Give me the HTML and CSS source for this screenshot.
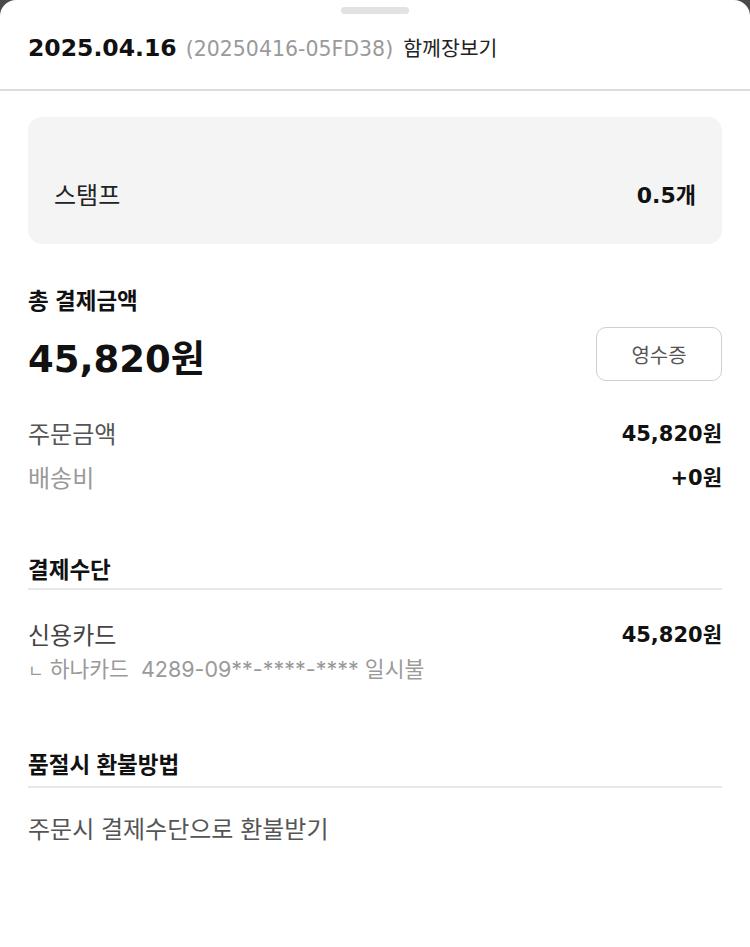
FILE: index.html
```html
<!DOCTYPE html>
<html lang="ko">
<head>
<meta charset="utf-8">
<link rel="stylesheet" href="styles.css">
</head>
<body>
<div class="sheet">
  <div class="handle"></div>
  <header class="head">
    <span class="date">2025.04.16</span>
    <span class="order-no">(20250416-05FD38)</span>
    <span class="kind">함께장보기</span>
  </header>
  <main class="content">
    <div class="stamp-box">
      <div class="row">
        <span class="stamp-label">스탬프</span>
        <span class="stamp-value">0.5개</span>
      </div>
    </div>

    <h2 class="title total-title">총 결제금액</h2>
    <div class="total-row">
      <span class="total-amount">45,820원</span>
      <button class="receipt">영수증</button>
    </div>

    <div class="lines">
      <div class="row">
        <span class="label">주문금액</span>
        <span class="value">45,820원</span>
      </div>
      <div class="row">
        <span class="label light">배송비</span>
        <span class="value">+0원</span>
      </div>
    </div>

    <h2 class="title section-title">결제수단</h2>
    <div class="row pay-row">
      <span class="label">신용카드</span>
      <span class="value">45,820원</span>
    </div>
    <div class="card-detail"><span class="mark">ㄴ</span> 하나카드&nbsp;&nbsp;4289-09**-****-**** 일시불</div>

    <h2 class="title section-title refund-title">품절시 환불방법</h2>
    <div class="refund">주문시 결제수단으로 환불받기</div>
  </main>
</div>
</body>
</html>
```

FILE: styles.css
```css
* { box-sizing: border-box; }
html, body { margin: 0; padding: 0; height: 100%; }
body {
  background: #4a4a4a;
  font-family: "Noto Sans CJK KR", sans-serif;
  color: #111;
}
.sheet {
  background: #fff;
  min-height: 100%;
  border-radius: 16px 16px 0 0;
  padding-top: 7px;
}
.handle {
  width: 68px;
  height: 7px;
  border-radius: 4px;
  background: #e2e2e2;
  margin: 0 auto;
}
.head {
  display: flex;
  align-items: baseline;
  height: 77px;
  padding: 18px 28px 0;
  border-bottom: 2px solid #dcdcdc;
}
.date {
  font-family: "DejaVu Sans", "Noto Sans CJK KR", sans-serif;
  font-size: 23.5px;
  font-weight: 700;
  color: #111;
}
.order-no {
  font-family: "DejaVu Sans", "Noto Sans CJK KR", sans-serif;
  font-size: 20.5px;
  color: #9a9a9a;
  margin-left: 9px;
}
.kind {
  font-size: 20.5px;
  color: #222;
  margin-left: 10px;
}
.content {
  padding: 26px 28px 40px;
}
.stamp-box {
  background: #f4f4f4;
  border-radius: 14px;
  padding: 62px 26px 37px;
}
.row {
  display: flex;
  justify-content: space-between;
  align-items: center;
  height: 32px;
}
.stamp-box .row { height: 28px; }
.stamp-label { font-size: 24px; color: #222; }
.stamp-value {
  font-family: "DejaVu Sans", "Noto Sans CJK KR", sans-serif;
  font-size: 22px;
  font-weight: 700;
  color: #111;
}
.title {
  margin: 0;
  font-size: 22.5px;
  font-weight: 700;
  line-height: 28px;
  color: #111;
}
.total-title { margin-top: 41px; }
.total-row {
  display: flex;
  justify-content: space-between;
  align-items: center;
  height: 54px;
  margin-top: 14px;
}
.total-amount {
  font-family: "DejaVu Sans", "Noto Sans CJK KR", sans-serif;
  font-size: 37px;
  font-weight: 700;
  padding-top: 3px;
}
.receipt {
  width: 126px;
  height: 54px;
  border: 1px solid #cfcfcf;
  border-radius: 10px;
  background: #fff;
  font-family: "Noto Sans CJK KR", sans-serif;
  font-size: 20px;
  color: #555;
}
.lines {
  margin-top: 35px;
  display: flex;
  flex-direction: column;
  gap: 12px;
}
.label { font-size: 24px; color: #555; }
.label.light { color: #9a9a9a; }
.value {
  font-family: "DejaVu Sans", "Noto Sans CJK KR", sans-serif;
  font-size: 21px;
  font-weight: 700;
  color: #111;
}
.section-title {
  margin-top: 62px;
  padding-bottom: 6px;
  border-bottom: 2px solid #e8e8e8;
}
.refund-title {
  margin-top: 64px;
  padding-bottom: 9px;
}
.pay-row { margin-top: 27px; }
.pay-row .label { color: #444; }
.card-detail {
  margin-top: 6px;
  font-family: "Inter", "Noto Sans CJK KR", sans-serif;
  font-size: 21.5px;
  line-height: 28px;
  color: #9a9a9a;
}
.mark {
  font-size: 17px;
}
.refund {
  margin-top: 24px;
  font-size: 24px;
  line-height: 32px;
  color: #555;
}
```
